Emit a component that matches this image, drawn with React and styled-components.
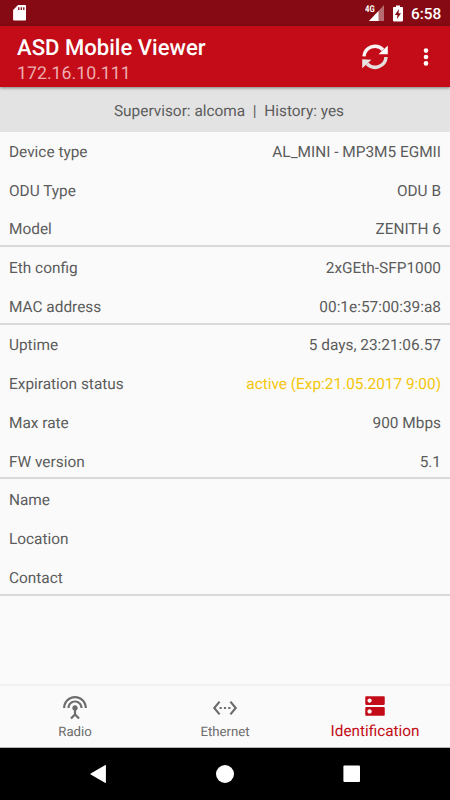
import React from "react";
import styled, { createGlobalStyle } from "styled-components";

const GlobalStyle = createGlobalStyle`
  * { box-sizing: border-box; }
  body { margin: 0; background: #fafafa; }
`;

const Screen = styled.div`
  width: 450px;
  height: 800px;
  display: flex;
  flex-direction: column;
  overflow: hidden;
  background: #fafafa;
  color: #5c5c5c;
  font-family: Roboto, "Liberation Sans", sans-serif;
  text-rendering: geometricPrecision;
`;

const StatusBar = styled.div`
  flex: none;
  height: 26px;
  padding: 0 9px 0 13px;
  display: flex;
  align-items: center;
  justify-content: space-between;
  background: #850a13;
`;

const StatusIcons = styled.div`
  display: flex;
  align-items: center;
  gap: 8px;
`;

const Clock = styled.span`
  width: 30px;
  padding-top: 2px;
  color: #fff;
  font-size: 15.4px;
  line-height: 20px;
  font-weight: 500;
  text-align: right;
  white-space: nowrap;
`;

const NetworkLabel = styled.text`
  font: 700 9.5px Roboto, sans-serif;
  fill: #fff;
`;

const AppBar = styled.header`
  flex: none;
  z-index: 1;
  height: 61px;
  padding-left: 17px;
  display: flex;
  align-items: center;
  justify-content: space-between;
  background: #c30c17;
  box-shadow: 0 1px 3px rgba(0, 0, 0, 0.45);
`;

const Titles = styled.div`
  display: flex;
  flex-direction: column;
  padding-top: 8px;
`;

const Title = styled.h1`
  margin: 0;
  color: #fff;
  font-size: 22.1px;
  line-height: 26px;
  font-weight: 500;
`;

const Subtitle = styled.div`
  color: #ecacb0;
  font-size: 17.75px;
  line-height: 26px;
`;

const Actions = styled.div`
  display: flex;
  align-items: center;
  gap: 34px;
  padding-right: 21px;
`;

const SessionBar = styled.div`
  flex: none;
  height: 45px;
  display: flex;
  align-items: center;
  justify-content: center;
  padding: 2px 0 0 8px;
  background: #e3e3e3;
  font-size: 15.4px;
  white-space: pre;
`;

const Details = styled.main`
  flex: 1;
  min-height: 0;
`;

const Section = styled.section`
  display: flex;
  flex-direction: column;
`;

const Row = styled.div`
  height: 38.73px;
  padding: 1px 9px 0;
  display: flex;
  align-items: center;
  justify-content: space-between;
  font-size: 15.4px;
  line-height: 20px;
`;

const Value = styled.span`
  color: ${(p) => (p.$warning ? "#f4c60c" : "inherit")};
`;

const Rule = styled.div`
  height: 2px;
  margin: -3px 0 1px;
  background: #d9d9d9;
`;

const Tabs = styled.nav`
  flex: none;
  height: 63px;
  display: grid;
  grid-template-columns: repeat(3, 1fr);
  border-top: 1px solid #efefef;
  border-bottom: 1px solid #b5b5b5;
  box-shadow: 0 -1px 1px #f3f3f3;
`;

const Tab = styled.div`
  display: flex;
  flex-direction: column;
  align-items: center;
  padding-top: ${(p) => (p.$active ? "7px" : "9px")};
  color: ${(p) => (p.$active ? "#c30c17" : "#6c6c6c")};
  font-size: ${(p) => (p.$active ? "15.3px" : "13.2px")};
  line-height: 20px;
`;

const TabLabel = styled.span`
  margin-top: 2px;
`;

const SystemBar = styled.div`
  flex: none;
  height: 52px;
  padding: 0 88px;
  display: flex;
  align-items: center;
  justify-content: space-between;
  background: #000;
`;

const SdCardIcon = () => (
  <svg width="14" height="18" viewBox="0 0 14 18">
    <path d="M5 1H12.2Q13 1 13 1.8V15.6Q13 16.5 12.2 16.5H1Q.1 16.5 .1 15.6V6Z" fill="#fff" />
    <path d="M5.8 3.2V6M8.3 3.2V6M10.8 3.2V6" stroke="#850a13" strokeWidth="1.3" />
  </svg>
);

const SignalIcon = () => (
  <svg width="20" height="18" viewBox="0 0 20 18">
    <path d="M4 17L19 1V17Z" fill="#b66b70" />
    <path d="M4 17L13.5 7V17Z" fill="#fff" />
    <path d="M0 0H10.5V8.3H0Z" fill="#850a13" />
    <NetworkLabel x="0" y="8" textLength="9.7" lengthAdjust="spacingAndGlyphs">4G</NetworkLabel>
  </svg>
);

const BatteryIcon = () => (
  <svg width="10" height="17" viewBox="0 0 10 17">
    <path d="M3 .5H7V2H9.2Q10 2 10 2.8V15.6Q10 16.4 9.2 16.4H.8Q0 16.4 0 15.6V2.8Q0 2 .8 2H3Z" fill="#fff" />
    <path d="M6 4L1.9 10H4.4L4 14L8 8.2H5.5Z" fill="#850a13" />
  </svg>
);

const RefreshIcon = () => (
  <svg width="28" height="28" viewBox="0 0 28 28">
    <g fill="none" stroke="#f8f2f2" strokeWidth="3.5">
      <path d="M3 13.4A11 10.9 0 0 1 22 6.8" />
      <path d="M25 14A11 10.9 0 0 1 6 20.8" stroke="#e4dede" />
    </g>
    <path d="M26.8 2.4V11.3H17.6L20.4 8.5L24.2 5Z" fill="#fff" />
    <path d="M1.2 25.2V16.2L10.4 16.7L7.6 19.3L4 22.8Z" fill="#e9e4e4" />
  </svg>
);

const MoreIcon = () => (
  <svg width="6" height="20" viewBox="0 0 6 20" fill="#fff">
    <circle cx="3" cy="3.6" r="2.3" />
    <circle cx="3" cy="10" r="2.3" />
    <circle cx="3" cy="16.4" r="2.3" />
  </svg>
);

const RadioIcon = () => (
  <svg width="26" height="26" viewBox="0 0 24 24" fill="currentColor">
    <path d="M12 5c-3.87 0-7 3.13-7 7h2c0-2.76 2.24-5 5-5s5 2.24 5 5h2c0-3.87-3.13-7-7-7zm1 9.29c.88-.39 1.5-1.26 1.5-2.29 0-1.38-1.12-2.5-2.5-2.5S9.5 10.62 9.5 12c0 1.02.62 1.9 1.5 2.29v3.3L7.59 21 9 22.41l3-3 3 3L16.41 21 13 17.59v-3.3zM12 1C5.93 1 1 5.93 1 12h2c0-4.97 4.03-9 9-9s9 4.03 9 9h2c0-6.07-4.93-11-11-11z" />
  </svg>
);

const EthernetIcon = () => (
  <svg width="26" height="26" viewBox="0 0 24 24" fill="currentColor">
    <path d="M7.77 6.76L6.23 5.48.82 12l5.41 6.52 1.54-1.28L3.42 12l4.35-5.24zM7 13h2v-2H7v2zm10-2h-2v2h2v-2zm-6 2h2v-2h-2v2zm6.77-7.52l-1.54 1.28L20.58 12l-4.35 5.24 1.54 1.28L23.18 12l-5.41-6.52z" />
  </svg>
);

const IdentificationIcon = () => (
  <svg width="26" height="26" viewBox="0 0 24 24" fill="currentColor">
    <path d="M20 13H4c-.55 0-1 .45-1 1v6c0 .55.45 1 1 1h16c.55 0 1-.45 1-1v-6c0-.55-.45-1-1-1zM7 19c-1.1 0-2-.9-2-2s.9-2 2-2 2 .9 2 2-.9 2-2 2zM20 3H4c-.55 0-1 .45-1 1v6c0 .55.45 1 1 1h16c.55 0 1-.45 1-1V4c0-.55-.45-1-1-1zM7 9c-1.1 0-2-.9-2-2s.9-2 2-2 2 .9 2 2-.9 2-2 2z" />
  </svg>
);

const BackIcon = () => (
  <svg width="20" height="20" viewBox="0 0 20 20">
    <path d="M17.9 1.3V18.7Q17.9 19.2 17.4 18.9L2.7 10.5Q2 10 2.7 9.5L17.4 1.1Q17.9.8 17.9 1.3Z" fill="#fff" />
  </svg>
);

const HomeIcon = () => (
  <svg width="20" height="20" viewBox="0 0 20 20">
    <circle cx="10" cy="10" r="9" fill="#fff" />
  </svg>
);

const RecentsIcon = () => (
  <svg width="20" height="20" viewBox="0 0 20 20">
    <rect x="1.4" y="1.4" width="16.6" height="16.6" rx="1" fill="#fff" />
  </svg>
);

const sections = [
  [
    { label: "Device type", value: "AL_MINI - MP3M5 EGMII" },
    { label: "ODU Type", value: "ODU B" },
    { label: "Model", value: "ZENITH 6" },
  ],
  [
    { label: "Eth config", value: "2xGEth-SFP1000" },
    { label: "MAC address", value: "00:1e:57:00:39:a8" },
  ],
  [
    { label: "Uptime", value: "5 days, 23:21:06.57" },
    { label: "Expiration status", value: "active (Exp:21.05.2017 9:00)", warning: true },
    { label: "Max rate", value: "900 Mbps" },
    { label: "FW version", value: "5.1" },
  ],
  [{ label: "Name" }, { label: "Location" }, { label: "Contact" }],
];

const tabs = [
  { label: "Radio", Icon: RadioIcon },
  { label: "Ethernet", Icon: EthernetIcon },
  { label: "Identification", Icon: IdentificationIcon, active: true },
];

export default function App() {
  return (
    <>
      <GlobalStyle />
      <Screen>
        <StatusBar>
          <SdCardIcon />
          <StatusIcons>
            <SignalIcon />
            <BatteryIcon />
            <Clock>6:58</Clock>
          </StatusIcons>
        </StatusBar>
        <AppBar>
          <Titles>
            <Title>ASD Mobile Viewer</Title>
            <Subtitle>172.16.10.111</Subtitle>
          </Titles>
          <Actions>
            <RefreshIcon />
            <MoreIcon />
          </Actions>
        </AppBar>
        <SessionBar>{"Supervisor: alcoma  |  History: yes"}</SessionBar>
        <Details>
          {sections.map((rows, i) => (
            <Section key={i}>
              {rows.map(({ label, value, warning }) => (
                <Row key={label}>
                  <span>{label}</span>
                  {value && <Value $warning={warning}>{value}</Value>}
                </Row>
              ))}
              <Rule />
            </Section>
          ))}
        </Details>
        <Tabs>
          {tabs.map(({ label, Icon, active }) => (
            <Tab key={label} $active={active}>
              <Icon />
              <TabLabel>{label}</TabLabel>
            </Tab>
          ))}
        </Tabs>
        <SystemBar>
          <BackIcon />
          <HomeIcon />
          <RecentsIcon />
        </SystemBar>
      </Screen>
    </>
  );
}
